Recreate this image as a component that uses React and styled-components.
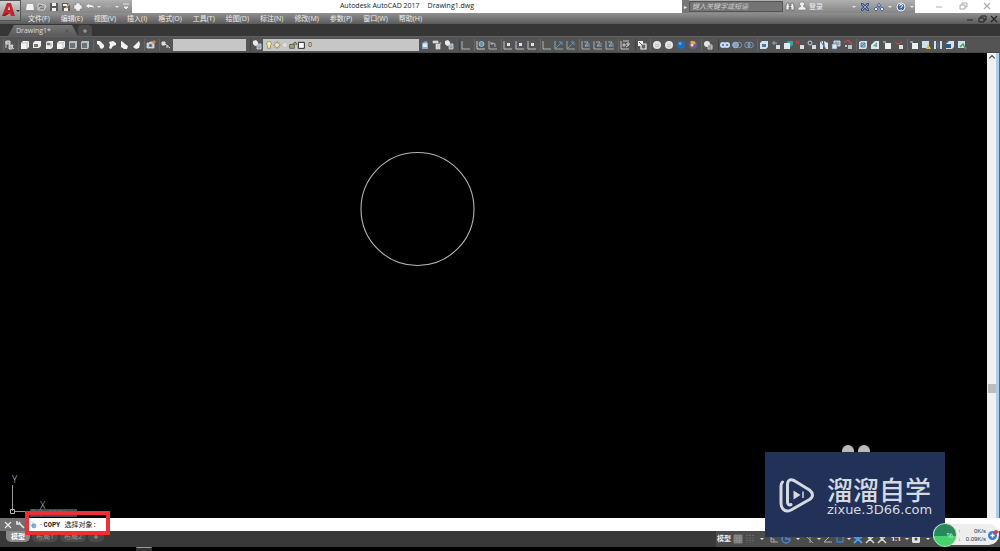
import React from 'react';
import styled, { createGlobalStyle, css } from 'styled-components';

const MENUS = ['文件(F)', '编辑(E)', '视图(V)', '插入(I)', '格式(O)', '工具(T)', '绘图(D)', '标注(N)', '修改(M)', '参数(P)', '窗口(W)', '帮助(H)'];

const GLYPHS = {
	// quick access
	newFile: <path d="M3 3h6l1 6H2z" fill="#f2f2f2" />,
	open: <path d="M2 3h3l1 1h3v1h1L8 9H2z M3 8l1-2h5" fill="#777" stroke="#eee" strokeWidth=".8" />,
	save: (
		<>
			<path d="M2 2h8v8H2z" fill="#5a5a5a" />
			<path d="M4 2h4v3H4z M4 7h4v3H4z" fill="#f0f0f0" />
		</>
	),
	saveAs: (
		<>
			<path d="M2 2h8v8H2z" fill="#5a5a5a" />
			<path d="M3 3h4v2H3z M4 7h4v3H4z" fill="#f0f0f0" />
			<path d="M6 7l4-5" stroke="#d2a568" strokeWidth="1.600" />
		</>
	),
	print: <path d="M4 2h4v2h2v4H8v2H4V8H2V4h2z" fill="#f2f2f2" stroke="#777" strokeWidth=".5" />,
	undo: <path d="M5 3L2 5l3 2V6h3c2 0 2 1 2 2 0-3-1-4-5-4z" fill="#f4f4f4" />,
	redo: <path d="M7 3l3 2-3 2V6H4C2 6 2 7 2 8c0-3 1-4 5-4z" fill="#a5a5a5" />,
	caret: <path d="M4 5h4L6 7z" fill="#e6e6e6" />,
	menuCaret: <path d="M3 3h6 M4 6h4L6 8z" fill="#eee" stroke="#eee" strokeWidth=".9" />,
	// help area
	binoculars: <path d="M2 9V5l1-3h2v3h2V2h2l1 3v4H7V6H5v3z" fill="#f0f0f0" stroke="#555" strokeWidth=".6" />,
	user: <path d="M6 1a2 2 0 0 1 1 4l3 2v2H2V7l3-2a2 2 0 0 1 1-4z" fill="#eee" stroke="#666" strokeWidth=".5" />,
	exchange: (
		<>
			<path d="M2 2h2l2 2 2-2h2v2L8 6l2 2v2H8L6 8l-2 2H2V8l2-2-2-2z" fill="#3b5286" />
			<path d="M3 3l6 6 M9 3L3 9" stroke="#dce4f2" strokeWidth=".6" />
		</>
	),
	connect: <path d="M6 2l2 3H4z M6 5v2 M1 8l2-2 2 2-2 2z M7 8l2-2 2 2-2 2z" fill="#dfe8fa" stroke="#42619c" strokeWidth=".9" />,
	help: (
		<>
			<circle cx="6" cy="6" r="4" fill="#3f62a5" stroke="#f2f2f2" strokeWidth="1" />
			<path d="M4.6 5q0-1.6 1.5-1.6T7.5 5Q7.4 5.700 6 6.300v.8 M6 8v.8" fill="none" stroke="#fff" strokeWidth="1" />
		</>
	),
	// view cubes
	viewport: <path d="M2 2h4v3H2z M2 2v7 M5 6h4l-1 4H5z M5 5l5 5" fill="#aaa" stroke="#ddd" strokeWidth=".9" />,
	cube: (
		<>
			<path d="M2 4l2-2h6v6L8 10H2z" fill="#f4f4f4" />
			<path d="M2.500 4H8v6 M8 4l2-2" fill="none" stroke="#9b9b9b" strokeWidth=".6" />
		</>
	),
	cubeTop: (
		<>
			<path d="M2 4l2-2h6v5L8 9H2z" fill="#f1f1f1" />
			<path d="M3 5h4v3H3z" fill="#777" />
		</>
	),
	cubeSide: (
		<>
			<path d="M3 3l2-1h5v6L8 10H3z" fill="#f1f1f1" />
			<path d="M4 4h3v2H4z M8 4v4" fill="#777" stroke="#888" strokeWidth=".6" />
		</>
	),
	cubeDark: (
		<>
			<path d="M2 3l1-1h7v6L9 10H2z" fill="#b8c1c6" />
			<path d="M3 4h5v5H3z" fill="#68747c" />
		</>
	),
	isoA: <path d="M3 2h3l4 4v2L8 10 6 9 5 6 3 5z" fill="#f3f3f3" />,
	isoB: <path d="M3 3l4-1 3 2v2L7 7l-2 3-2-1 1-3z" fill="#f3f3f3" />,
	isoC: <path d="M3 2l2 1 2 2 3 2-1 3H6L3 8z" fill="#f3f3f3" />,
	isoD: <path d="M9 2l1 3-1 4-3 1-3-2 3-3z" fill="#f3f3f3" />,
	camera: (
		<>
			<path d="M2 4h2l1-1h4v6H2z" fill="#b9c6cf" stroke="#eee" strokeWidth=".7" />
			<circle cx="5.500" cy="6.500" r="1.500" fill="#56616b" />
			<path d="M7 3l2-2 2 2-2 2z" fill="#cf8148" />
		</>
	),
	key: <path d="M2 3h3v3H2z M5 5l5 4 M7 6v3" fill="#ddd" stroke="#ddd" strokeWidth="1" />,
	// layers
	layers: (
		<>
			<path d="M2 2l3-1 2 2v3L4 7 2 5z" fill="#e9e9e9" />
			<path d="M6 5h4v5H6z M7 7h2" fill="#7b9ab2" stroke="#eee" strokeWidth=".7" />
		</>
	),
	layerCard: (
		<>
			<path d="M3 4l4-2 2 2v6H3z" fill="#8fb0c3" />
			<path d="M4 5l3-1 1 1v3H4z" fill="#d9eaf2" />
		</>
	),
	layerPrev: <path d="M2 2h5v2H2z M5 5h4v5H5z M9 3l1 2" fill="#c8d0d4" stroke="#eee" strokeWidth=".6" />,
	bulb: <path d="M6 0a4 4 0 0 1 2 7v4H4V7a4 4 0 0 1 2-7z" fill="#f6efa8" stroke="#7d774b" strokeWidth="1" />,
	sun: (
		<>
			<path d="M6 0v12 M0 6h12 M2 2l8 8 M10 2l-8 8" stroke="#8d875c" strokeWidth="1" />
			<circle cx="6" cy="6" r="3.500" fill="#f3ecb7" stroke="#8d875c" strokeWidth="1" />
		</>
	),
	freeze: <path d="M6 2l4 2v4l-4 2-4-2V4z" fill="#dcdcdc" stroke="#b5b5b5" strokeWidth="1" />,
	lock: <path d="M1 5h7v6H1z M7 5V3q2-3 4 0v3" fill="#a3a176" stroke="#5a5a46" strokeWidth="1.300" />,
	swatch: <path d="M2 2h9v9H2z" fill="#fff" stroke="#222" strokeWidth="1.500" />,
	// ucs
	axes: <path d="M2 2v8h8" fill="none" stroke="#aeb5ba" strokeWidth="1" />,
	axesWorld: (
		<>
			<path d="M2 2v8h8" fill="none" stroke="#c8ced2" strokeWidth="1" />
			<circle cx="6.500" cy="5" r="2.500" fill="#5f93b8" stroke="#cfe2ec" strokeWidth=".6" />
		</>
	),
	axesBack: <path d="M2 2v8h8 M8 8V5q-2-2-4 0 M4 3v2h2" fill="none" stroke="#b7c0c6" strokeWidth=".9" />,
	axesDot: (
		<>
			<path d="M2 2v8h8" fill="none" stroke="#bcc3c8" strokeWidth="1" />
			<path d="M5 4h3v3H5z" fill="#cfe4f5" />
		</>
	),
	axesBlue: (
		<>
			<path d="M2 2v8h8" fill="none" stroke="#9da6ac" strokeWidth="1" />
			<path d="M3 9l5-5 M6 3h3v3" fill="none" stroke="#5b97c6" strokeWidth="1" />
		</>
	),
	axesTurn: (
		<>
			<path d="M2 2v8h8 M4 3h4l-3 4h4" fill="none" stroke="#b1b9be" strokeWidth=".9" />
			<path d="M5 8l4-4v4" fill="none" stroke="#5d94c1" strokeWidth=".9" />
		</>
	),
	axesGrid: <path d="M2 2v8h8 M4 2h6 M8 4h2v2H8z M4 5h2v2H4z M7 8l3-2" fill="none" stroke="#d3d3d3" strokeWidth=".9" />,
	// visual styles
	wire2d: (
		<>
			<path d="M2 2h5v5H2z" fill="#f1f1f1" />
			<path d="M5 5h5v5H5z" fill="#666" stroke="#f1f1f1" strokeWidth="1.200" />
			<path d="M3 3l4 4" stroke="#666" strokeWidth="1" />
		</>
	),
	ballWhite: (
		<>
			<circle cx="6" cy="6" r="4" fill="#e6e6e6" />
			<path d="M4 5q2 2 4 0 M4 7q2 2 4 0" fill="none" stroke="#aaa" strokeWidth=".7" />
		</>
	),
	ballBlue: (
		<>
			<circle cx="6" cy="6" r="4" fill="#1d6ec0" />
			<circle cx="5" cy="4.500" r="1.500" fill="#5ba6e7" />
		</>
	),
	ballGold: (
		<>
			<circle cx="6" cy="6" r="4" fill="#6f5aa0" />
			<path d="M3 3q3-3 6 1L6 6z" fill="#e9a43c" />
			<circle cx="5" cy="6" r="1.500" fill="#efd9a3" />
		</>
	),
	styles: (
		<>
			<circle cx="5" cy="5" r="3" fill="#e6e6e6" />
			<path d="M6 6h4v4H6z M7 8h3" fill="#666" stroke="#ddd" strokeWidth=".9" />
		</>
	),
	// solids editing
	union: (
		<>
			<circle cx="4" cy="6" r="3" fill="#c9def6" />
			<circle cx="8" cy="6" r="3" fill="#c9def6" />
			<path d="M3 6h2 M7 6h2" stroke="#426aa8" strokeWidth="1.400" />
		</>
	),
	subtract: (
		<>
			<circle cx="4.500" cy="6" r="2.800" fill="#7ea0d2" stroke="#b7cae6" strokeWidth=".8" />
			<circle cx="8" cy="6" r="2.800" fill="none" stroke="#8398b6" strokeWidth=".8" />
		</>
	),
	intersect: (
		<>
			<circle cx="4.500" cy="6" r="2.800" fill="none" stroke="#8ba4c5" strokeWidth=".8" />
			<circle cx="7.500" cy="6" r="2.800" fill="none" stroke="#8ba4c5" strokeWidth=".8" />
			<path d="M6 4v4" stroke="#71a0e4" strokeWidth="1.400" />
		</>
	),
	faceExtrude: (
		<>
			<path d="M2 4l2-2h6v6l-2 2H2z" fill="#d4e3ed" />
			<path d="M4 5h4v3H4z" fill="#4d7ba8" />
		</>
	),
	faceMove: (
		<>
			<path d="M2 4h5 M4 2v4" stroke="#9aa7b0" strokeWidth="1" />
			<path d="M6 6h4v4H6z" fill="#d9e2e8" />
		</>
	),
	faceOffset: (
		<>
			<path d="M4 4l2-2h5v4L8 8V4z" fill="#39a2a4" />
			<path d="M2 4h6v6H2z" fill="#e3eaef" />
		</>
	),
	faceDelete: (
		<>
			<path d="M2 2l3 3 M5 2L2 5" stroke="#c6423d" strokeWidth="1.200" />
			<path d="M6 6h4v4H6z" fill="#d8dfe5" />
		</>
	),
	faceRotate: (
		<>
			<circle cx="4" cy="4" r="2" fill="none" stroke="#c3ccd2" strokeWidth="1" />
			<path d="M6 6h4v4H6z" fill="#cfdbe4" />
		</>
	),
	faceTaper: (
		<>
			<path d="M2 3l3-1v8H2z M6 2l4 2v6H7z" fill="#dce7ee" />
			<path d="M3 3l5 7" stroke="#4c7fae" strokeWidth="1" />
		</>
	),
	faceCopy: (
		<>
			<path d="M4 2h6v5H4z" fill="#93acc1" stroke="#e6edf1" strokeWidth=".8" />
			<path d="M2 5h5v5H2z" fill="#dee8ef" stroke="#557a99" strokeWidth=".6" />
		</>
	),
	faceColor: (
		<>
			<path d="M2 4q3-4 6-1l2 2" fill="none" stroke="#c64e45" strokeWidth="1.200" />
			<path d="M6 6h4v4H6z M3 6h2v2H3z" fill="#b9c4cc" />
		</>
	),
	edge: (
		<>
			<path d="M2 3l2-1h6v6l-1 2H2z" fill="#d6e3ec" />
			<path d="M4 4h4v4H4z M4 8l4-4" fill="#a4bfd3" stroke="#44719a" strokeWidth=".8" />
		</>
	),
	edgeColor: (
		<>
			<path d="M2 6l4-4h4v8H2z" fill="#dce7ee" />
			<path d="M4 7l4-4v5z" fill="#65a39a" />
		</>
	),
	imprint: (
		<>
			<path d="M2 2h3v2H2z" fill="#8d979e" />
			<path d="M4 4h6v6H4z" fill="#eef1f3" />
		</>
	),
	clean: (
		<>
			<path d="M2 3l3 2 4-2" fill="none" stroke="#bb4c42" strokeWidth="1.200" />
			<path d="M6 6h4v4H6z" fill="#dbe1e5" />
		</>
	),
	separate: (
		<>
			<path d="M2 2h7v7H2z" fill="#cbdfef" />
			<path d="M8 5l3 5H6z" fill="#e4bf4e" />
		</>
	),
	shell: (
		<>
			<path d="M3 2v8 M9 2v8" stroke="#cfe0ee" strokeWidth="2" />
			<path d="M6 3v6" stroke="#4f82b2" strokeWidth="1" />
		</>
	),
	check: (
		<>
			<path d="M2 5l3-3h5v6l-2 2H2z" fill="#d7e3ec" />
			<path d="M2 5h5v4H2z" fill="#285a94" />
		</>
	),
	checkOk: (
		<>
			<path d="M2 2h7v7H2z" fill="#cfe2ef" />
			<path d="M4 8l3-3 1 2 2 3" fill="none" stroke="#4da256" strokeWidth="1.500" />
		</>
	),
	// status bar
	grid: <path d="M2 2h8v8H2z M2 5h8 M2 7.500h8 M5 2v8 M7.500 2v8" fill="#777" stroke="#969696" strokeWidth=".7" />,
	snap: <path d="M3 2v8 M6 2v8 M9 2v8" stroke="#747474" strokeWidth="1.400" strokeDasharray="1 1.500" />,
	ortho: <path d="M3 2v7h7 M3 6h3v3" fill="none" stroke="#aaa" strokeWidth="1" />,
	polar: <path d="M6 2a4 4 0 1 0 4 4H6z" fill="none" stroke="#3d8fe0" strokeWidth="1.300" />,
	iso: <path d="M2 3l7 7 M6 2v8" stroke="#a6a6a6" strokeWidth="1" />,
	track: <path d="M9 2L2 9h8" fill="none" stroke="#b5b5b5" strokeWidth="1" />,
	osnap: <path d="M3 3h6v6H3z" fill="none" stroke="#3982c8" strokeWidth="1.300" />,
	annoBlue: <path d="M2 10l4-4 4 4 M2 4l4 2 4-2 M6 2v5" fill="none" stroke="#4b9eed" strokeWidth="1.800" />,
	anno: <path d="M2 10l4-4 4 4 M6 2v5 M4 4l2 2 3-2" fill="none" stroke="#d6d6d6" strokeWidth="1.500" />,
	gear: (
		<>
			<path d="M2 3l1-1h6l1 1v6l-1 1H3L2 9z" fill="#e1e1e1" />
			<circle cx="6" cy="6" r="1.500" fill="#4b4b4b" />
		</>
	),
	// command line and windows
	cross: <path d="M3 3l6 6 M9 3L3 9" stroke="currentColor" strokeWidth="1.200" />,
	wrench: <path d="M3 2v3h3L10 9 M5 3l1 2" fill="none" stroke="#e5e5e5" strokeWidth="1.700" />,
	copy: (
		<>
			<circle cx="4" cy="4" r="2" fill="none" stroke="#b7c5d4" strokeWidth=".8" />
			<circle cx="7" cy="7" r="2.500" fill="#7fb2e4" stroke="#4c83bd" strokeWidth=".7" />
		</>
	),
	min: <path d="M3 7h6" stroke="currentColor" strokeWidth="1" />,
	restore: <path d="M3 5h5v4H3z M5 5V3h5v4H8" fill="none" stroke="currentColor" strokeWidth="1" />,
	plus: <path d="M6 2v8 M2 6h8" stroke="currentColor" strokeWidth="2" />,
	up: <path d="M2 8l4-4 4 4" fill="none" stroke="#444" strokeWidth="1.800" />,
};

const TOOLS_LEFT = [
	{ tools: ['viewport'] },
	{ tools: ['cube', 'cubeTop', 'cubeSide', 'cube', 'cubeDark', 'cubeDark'] },
	{ tools: ['isoA', 'isoB', 'isoC', 'isoD'] },
	{ tools: ['camera'] },
	{ tools: ['key'] },
];

const TOOLS_RIGHT = [
	{ tools: ['axes'], wide: true },
	{ tools: ['axesWorld', 'axesBack'] },
	{ tools: ['axesDot', 'axesDot', 'axesDot'] },
	{ tools: ['axes', 'axesBlue', 'axesBlue'] },
	{ tools: ['axesTurn', 'axesTurn', 'axesTurn'] },
	{ tools: ['axesGrid'] },
	{ tools: ['wire2d'], wide: true },
	{ tools: ['ballWhite', 'ballWhite', 'ballBlue', 'ballGold'] },
	{ tools: ['styles'] },
	{ tools: ['union', 'subtract', 'intersect'], wide: true },
	{ tools: ['faceExtrude', 'faceMove', 'faceOffset', 'faceDelete', 'faceRotate', 'faceTaper', 'faceCopy', 'faceColor'] },
	{ tools: ['edge', 'edgeColor', 'imprint', 'clean'] },
	{ tools: ['imprint', 'separate', 'shell', 'check', 'checkOk'] },
];

const Icon = ({ name, size = 12 }) => (
	<Svg viewBox="0 0 12 12" width={size} height={size} aria-hidden="true">
		{GLYPHS[name]}
	</Svg>
);

const Tool = ({ name }) => (
	<IconButton type="button" aria-label={name}>
		<Icon name={name} />
	</IconButton>
);

const DropArrow = ({ label }) => (
	<IconButton type="button" $narrow aria-label={label}>
		<Icon name="caret" />
	</IconButton>
);

const ToolGroups = ({ groups }) =>
	groups.map(({ tools, wide }, i) => (
		<Group key={i} $wide={wide}>
			{tools.map((name, j) => (
				<Tool key={j} name={name} />
			))}
		</Group>
	));

const TitleBar = () => (
	<Title>
		<QuickAccess>
			{['newFile', 'open', 'save', 'saveAs', 'print', 'undo'].map((name) => (
				<Tool key={name} name={name} />
			))}
			<DropArrow label="undo list" />
			<Tool name="redo" />
			<DropArrow label="redo list" />
			<Tool name="menuCaret" />
		</QuickAccess>
		<Caption>
			<span>Autodesk AutoCAD 2017</span>
			<span>Drawing1.dwg</span>
		</Caption>
		<InfoCenter>
			<Expander type="button" aria-label="collapse">
				▸
			</Expander>
			<Search type="text" aria-label="search" placeholder="键入关键字或短语" />
			<Tool name="binoculars" />
			<SignIn type="button">
				<Icon name="user" />
				登录
			</SignIn>
			<HelpTools>
				<DropArrow label="account list" />
				<Tool name="exchange" />
				<Tool name="connect" />
				<DropArrow label="connect list" />
				<Tool name="help" />
				<DropArrow label="help list" />
			</HelpTools>
		</InfoCenter>
		<WindowButtons>
			<Tool name="min" />
			<Tool name="restore" />
			<Tool name="cross" />
		</WindowButtons>
	</Title>
);

const Drawing = () => (
	<Workspace>
		<Canvas>
			<Shape viewBox="0 0 116 116" role="img" aria-label="circle">
				<circle cx="58.500" cy="58" r="56.500" fill="none" stroke="#b4b4b4" strokeWidth="1.100" />
			</Shape>
			<Ucs viewBox="0 0 52 44">
				<path d="M12.500 12v26 M15 38.500h28" stroke="#999" fill="none" />
				<path d="M10.500 36.500h4v4h-4z" stroke="#bbb" fill="none" />
				<text x="12" y="10">Y</text>
				<text x="40" y="36">X</text>
			</Ucs>
			<History>命令: COPY</History>
		</Canvas>
		<ScrollBar>
			<ScrollArrow type="button" aria-label="scroll up">
				<Icon name="up" size={8} />
			</ScrollArrow>
			<Thumb />
		</ScrollBar>
	</Workspace>
);

const Brand = () => (
	<BrandBox>
		<Ears>
			<Ear />
			<Ear />
		</Ears>
		<BrandMark viewBox="0 0 36 36">
			<path
				d="M3.500 5Q2 6.500 2 9v17q0 4 2 6 3 3.500 8 1L30.500 22.500q6-4.500 0-9.500L15 3.500Q8.500 1 8.500 8v17q0 4 3.500 2.500"
				fill="none"
				stroke="#d5d9e0"
				strokeWidth="3"
				strokeLinecap="round"
				strokeLinejoin="round"
			/>
			<path d="M14.500 13.500l7 4.500-7 4.500z" fill="#d5d9e0" />
			<path d="M24 14.500v6.500" stroke="#d5d9e0" strokeWidth="1.500" />
		</BrandMark>
		<BrandText>
			<BrandName>溜溜自学</BrandName>
			<BrandSite>zixue.3D66.com</BrandSite>
		</BrandText>
	</BrandBox>
);

const NetMeter = () => (
	<Meter>
		<Percent>%</Percent>
		<Rates>
			<Rate $color="#d96b5c">
				<i>↑</i>0K/s
			</Rate>
			<Rate $color="#4f9a52">
				<i>↓</i>0.09K/s
			</Rate>
		</Rates>
		<MeterIcon viewBox="0 0 12 12">
			<circle cx="5.500" cy="6.500" r="4.500" fill="#3c7fd0" />
			<path d="M5.500 4.500v4 M3.500 6.500h4" stroke="#fff" strokeWidth="1.300" />
			<circle cx="9" cy="3" r="2" fill="#d8374b" />
		</MeterIcon>
	</Meter>
);

export default function App() {
	return (
		<Shell>
			<GlobalStyle />
			<AppButton type="button" aria-label="application menu">
				<svg viewBox="0 0 21 21" width="21" height="21">
					<path d="M2 15L7 2h4l4 13h-4l-1-3H7l-2 3z" fill="#c4262e" />
					<path d="M8 9l1-4 1 4z" fill="#eee" />
					<path d="M2 15l5-3h3l-5 3z" fill="#8c1219" />
					<path d="M16 9h4l-2 2z" fill="#333" />
				</svg>
			</AppButton>
			<TitleBar />
			<MenuBar>
				{MENUS.map((menu) => (
					<MenuItem key={menu} type="button">
						{menu}
					</MenuItem>
				))}
				<DocButtons>
					<Tool name="min" />
					<Tool name="restore" />
					<Tool name="cross" />
				</DocButtons>
			</MenuBar>
			<FileTabs>
				<FileTab type="button">
					Drawing1*
					<Icon name="cross" size={6} />
				</FileTab>
				<NewTab type="button" aria-label="new tab">
					<Icon name="plus" size={6} />
				</NewTab>
			</FileTabs>
			<Toolbar>
				<ToolGroups groups={TOOLS_LEFT} />
				<ViewSelect aria-label="view">
					<option> </option>
				</ViewSelect>
				<Group $wide>
					<Tool name="layers" />
				</Group>
				<LayerBox>
					{['bulb', 'sun', 'freeze', 'lock', 'swatch'].map((name) => (
						<Icon key={name} name={name} size={8} />
					))}
					<LayerSelect aria-label="layer">
						<option>0</option>
					</LayerSelect>
				</LayerBox>
				<Tool name="layerCard" />
				<Tool name="layerPrev" />
				<Tool name="layers" />
				<ToolGroups groups={TOOLS_RIGHT} />
			</Toolbar>
			<Drawing />
			<CommandLine>
				<CommandTools>
					<Tool name="cross" />
					<Tool name="wrench" />
				</CommandTools>
				<Prompt>
					<Icon name="copy" size={10} />
					<small>-</small>
					<label htmlFor="command">
						<b>COPY</b> 选择对象:
					</label>
					<CommandInput id="command" type="text" />
				</Prompt>
				<Highlight />
			</CommandLine>
			<StatusBar>
				<LayoutTab type="button" $active>
					模型
				</LayoutTab>
				<LayoutTab type="button">布局1</LayoutTab>
				<LayoutTab type="button">布局2</LayoutTab>
				<LayoutTab type="button" aria-label="new layout">
					<Icon name="plus" size={6} />
				</LayoutTab>
				<StatusTools>
					<StatusText type="button">模型</StatusText>
					<Tool name="grid" />
					<Tool name="snap" />
					<Tool name="caret" />
					<Tool name="ortho" />
					<Tool name="polar" />
					<Tool name="caret" />
					<Tool name="iso" />
					<DropArrow label="isometric list" />
					<Tool name="track" />
					<Tool name="osnap" />
					<DropArrow label="snap list" />
					<Tool name="annoBlue" />
					<Tool name="anno" />
					<Tool name="anno" />
					<StatusText type="button">1:1</StatusText>
					<DropArrow label="scale list" />
					<Tool name="gear" />
					<Tool name="caret" />
				</StatusTools>
			</StatusBar>
			<TaskBar>
				<TaskItem />
			</TaskBar>
			<Brand />
			<NetMeter />
		</Shell>
	);
}

const GlobalStyle = createGlobalStyle`
	* {
		box-sizing: border-box;
	}
	body {
		margin: 0;
		background: #000;
		font-family: 'Open Sans', 'Noto Sans CJK SC', sans-serif;
		font-size: 7px;
	}
	button, input, select {
		margin: 0;
		padding: 0;
		border: 0;
		background: none;
		color: inherit;
		font: inherit;
	}
`;

const Shell = styled.main`
	position: relative;
	display: flex;
	flex-direction: column;
	min-height: 100vh;
	overflow: hidden;
`;

const Svg = styled.svg`
	display: block;
	flex: none;
`;

const IconButton = styled.button`
	display: flex;
	flex: none;
	align-items: center;
	justify-content: center;
	width: ${(p) => (p.$narrow ? '6px' : '12px')};
	height: 12px;
`;

const AppButton = styled.button`
	position: absolute;
	top: 0;
	left: 0;
	z-index: 2;
	width: 21px;
	height: 21px;
	border: 1px solid #555;
	border-left: 0;
	background: linear-gradient(#d2d2d2, #8c8c8c);
	overflow: hidden;
`;

const Title = styled.header`
	display: flex;
	height: 13px;
	background: #fff;
`;

const chrome = css`
	display: flex;
	align-items: center;
	background: linear-gradient(#b0b0b0, #858585);
`;

const QuickAccess = styled.div`
	${chrome}
	width: 132px;
	padding-left: 24px;
`;

const Caption = styled.h1`
	display: flex;
	flex: 1;
	justify-content: center;
	gap: 8px;
	margin: 0;
	color: #222;
	font-size: 7px;
	font-weight: 400;
	line-height: 12px;
`;

const InfoCenter = styled.div`
	${chrome}
	width: 233px;
	color: #eee;
`;

const Expander = styled.button`
	width: 7px;
	height: 13px;
	background: #777;
	font-size: 6px;
	line-height: 12px;
`;

const Search = styled.input`
	width: 94px;
	height: 11px;
	margin-right: 1px;
	padding-left: 2px;
	border: 1px solid #555;
	background: #747474;
	font-style: italic;

	&::placeholder {
		color: #ccc;
	}
`;

const SignIn = styled.button`
	display: flex;
	align-items: center;
	gap: 1px;
	line-height: 12px;
`;

const HelpTools = styled.div`
	display: flex;
	gap: 2px;
	margin-left: auto;
`;

const WindowButtons = styled.div`
	display: flex;
	justify-content: space-between;
	width: 85px;
	padding: 0 7px 0 18px;
	color: #aaa;
`;

const MenuBar = styled.nav`
	display: flex;
	align-items: center;
	gap: 11px;
	height: 11px;
	padding-left: 28px;
	background: linear-gradient(#909090, #5b5b5b);
	color: #eee;
`;

const MenuItem = styled.button`
	min-width: 20px;
	line-height: 10px;
	white-space: nowrap;
`;

const DocButtons = styled.div`
	display: flex;
	margin-left: auto;
	color: #222;
`;

const FileTabs = styled.div`
	display: flex;
	align-items: flex-end;
	height: 12px;
	padding-left: 8px;
	background: #363636;
`;

const FileTab = styled.button`
	display: flex;
	align-items: center;
	justify-content: space-between;
	width: 70px;
	height: 11px;
	padding: 0 8px;
	background: linear-gradient(#757575, #5a5a5a);
	clip-path: polygon(6px 0, 64px 0, 100% 100%, 0 100%);
	color: #ddd;
	line-height: 10px;

	svg {
		color: #444;
	}
`;

const NewTab = styled.button`
	display: flex;
	align-items: center;
	justify-content: center;
	width: 14px;
	height: 11px;
	border-radius: 4px 4px 0 0;
	background: #4c4c4c;
	color: #aaa;
`;

const Toolbar = styled.div`
	display: flex;
	align-items: center;
	height: 17px;
	padding-left: 1px;
	border-top: 1px solid #606060;
	border-bottom: 1px solid #484848;
	background: #545454;
	overflow: hidden;
`;

const Group = styled.div`
	display: flex;
	flex: none;
	margin-left: ${(p) => (p.$wide ? '4px' : '2px')};
	border-left: 1px solid ${(p) => (p.$wide ? '#404040' : '#666')};
`;

const ViewSelect = styled.select`
	flex: none;
	width: 73px;
	height: 12px;
	margin-left: 1px;
	background: #c6c6c6;
	appearance: none;
`;

const LayerBox = styled.div`
	display: flex;
	flex: none;
	align-items: center;
	width: 156px;
	height: 12px;
	padding-left: 2px;
	background: #c6c6c6;
	color: #444;
`;

const LayerSelect = styled.select`
	flex: 1;
	height: 12px;
	padding-left: 3px;
	appearance: none;
`;

const Workspace = styled.section`
	display: flex;
	flex: 1;
	min-height: 240px;
`;

const Canvas = styled.div`
	position: relative;
	flex: 1;
	background: #000;
`;

const Shape = styled.svg`
	position: absolute;
	top: 98px;
	left: 359px;
	width: 116px;
	height: 116px;
`;

const Ucs = styled.svg`
	position: absolute;
	bottom: 1px;
	left: 0;
	width: 52px;
	height: 44px;

	text {
		fill: #ccc;
		font-size: 10px;
		font-weight: 300;
	}
`;

const History = styled.div`
	position: absolute;
	bottom: 1px;
	left: 30px;
	min-width: 47px;
	background: #4d4d4d;
	color: #777;
	line-height: 8px;
	white-space: nowrap;
`;

const ScrollBar = styled.div`
	display: flex;
	flex-direction: column;
	align-items: center;
	width: 13px;
	padding-right: 4px;
	background: linear-gradient(90deg, #f1f1f1 9px, #a9cdea 9px, #a9cdea 12px, #3a7391 12px);
`;

const ScrollArrow = styled.button`
	display: flex;
	width: 8px;
	height: 10px;
`;

const Thumb = styled.div`
	width: 8px;
	height: 9px;
	margin-top: auto;
	margin-bottom: 125px;
	background: #bdbdbd;
`;

const CommandLine = styled.div`
	position: relative;
	display: flex;
	height: 13px;
	background: #fff;
`;

const CommandTools = styled.div`
	display: flex;
	align-items: center;
	width: 28px;
	padding-left: 2px;
	background: #707070;
	color: #eee;
`;

const Prompt = styled.div`
	display: flex;
	flex: 1;
	align-items: center;
	gap: 1px;
	color: #222;
	font-family: 'Liberation Mono', 'Noto Sans CJK SC', monospace;
	font-size: 7px;
	line-height: 12px;
`;

const CommandInput = styled.input`
	flex: 1;
	height: 12px;
	outline: 0;
`;

const Highlight = styled.div`
	position: absolute;
	top: -7px;
	left: 25px;
	width: 85px;
	height: 24px;
	border: 4px solid #ee3035;
	pointer-events: none;
`;

const StatusBar = styled.footer`
	display: flex;
	height: 16px;
	padding-left: 6px;
	background: #393939;
`;

const LayoutTab = styled.button`
	display: flex;
	align-items: center;
	justify-content: center;
	min-width: ${(p) => (p.$active ? '24px' : '16px')};
	height: 11px;
	margin-right: 2px;
	padding: 0 4px;
	border-radius: 0 0 5px 5px;
	background: ${(p) => (p.$active ? '#888' : '#4b4b4b')};
	color: ${(p) => (p.$active ? '#fff' : '#999')};
	font-weight: ${(p) => (p.$active ? 700 : 400)};
	line-height: 10px;
`;

const StatusTools = styled.div`
	display: flex;
	align-items: center;
	margin-left: auto;
	padding-right: 66px;
	background: #4b4b4b;
	color: #eee;
`;

const StatusText = styled.button`
	min-width: 16px;
	font-weight: 700;
	line-height: 12px;
`;

const TaskBar = styled.div`
	height: 4px;
	padding-left: 136px;
	background: #000;
`;

const TaskItem = styled.div`
	width: 16px;
	height: 4px;
	border: 1px solid #333;
	border-top-color: #999;
	background: #333;
`;

const BrandBox = styled.aside`
	position: absolute;
	right: 55px;
	bottom: 14px;
	display: flex;
	align-items: center;
	gap: 12px;
	width: 180px;
	height: 85px;
	padding-left: 14px;
	background: #223158;
	color: #d5d9e0;
`;

const Ears = styled.div`
	position: absolute;
	top: -7px;
	left: 77px;
	display: flex;
	gap: 4px;
`;

const Ear = styled.div`
	width: 12px;
	height: 7px;
	border-radius: 6px 6px 0 0;
	background: #b9b9b9;
`;

const BrandMark = styled.svg`
	flex: none;
	width: 36px;
	height: 36px;
`;

const BrandText = styled.div`
	display: flex;
	flex-direction: column;
`;

const BrandName = styled.strong`
	font-family: 'Noto Sans CJK SC', sans-serif;
	font-size: 26px;
	font-weight: 500;
	line-height: 30px;
`;

const BrandSite = styled.span`
	font-family: 'DejaVu Sans', sans-serif;
	font-size: 13px;
	line-height: 12px;
`;

const Meter = styled.aside`
	position: absolute;
	right: 1px;
	bottom: 6px;
	display: flex;
	align-items: center;
	width: 66px;
	height: 21px;
	border-radius: 10px;
	background: #eee;
`;

const Percent = styled.div`
	display: flex;
	flex: none;
	align-items: center;
	justify-content: flex-end;
	width: 24px;
	height: 24px;
	padding-right: 3px;
	border: 1px solid #b9dcc4;
	border-radius: 50%;
	background: linear-gradient(#28885b 55%, #45d46c 55%);
	color: #d8f2df;
	font-size: 8px;
`;

const Rates = styled.div`
	flex: 1;
	padding: 0 1px;
`;

const Rate = styled.div`
	display: flex;
	justify-content: space-between;
	color: #333;
	font-family: 'Liberation Sans', sans-serif;
	font-size: 6px;
	line-height: 8px;

	i {
		color: ${(p) => p.$color};
		font-style: normal;
	}
`;

const MeterIcon = styled.svg`
	flex: none;
	width: 12px;
	height: 12px;
`;
